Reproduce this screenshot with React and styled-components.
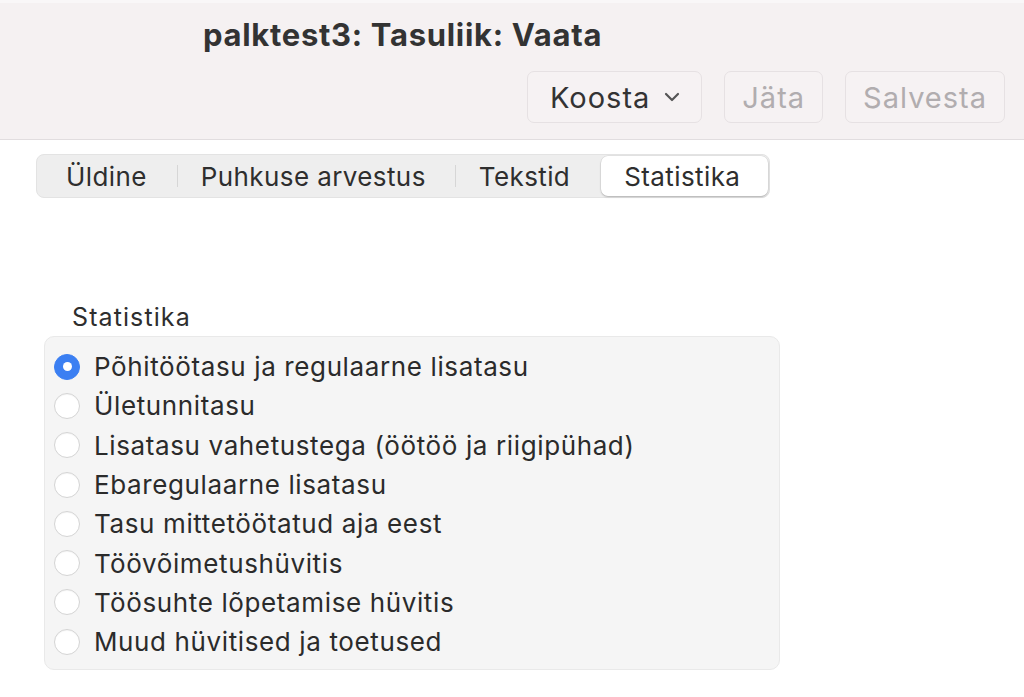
import React, { useState } from "react";
import styled, { createGlobalStyle } from "styled-components";

const GlobalStyle = createGlobalStyle`
  html, body {
    margin: 0;
    padding: 0;
    background: #ffffff;
    font-family: Inter, "Noto Sans", "Liberation Sans", sans-serif;
    color: #2a2a2a;
  }
`;

const Page = styled.div`
  width: 1024px;
  height: 697px;
  overflow: hidden;
  background: #ffffff;
`;

const Header = styled.header`
  height: 136px;
  border-top: 3px solid #f9f7f8;
  border-bottom: 1px solid #e1dddf;
  background: #f5f1f2;
  display: flex;
  flex-direction: column;
  padding: 0 19px 0 203px;
  box-sizing: content-box;
`;

const Title = styled.h1`
  margin: 13px 0 0;
  font-size: 31px;
  font-weight: 700;
  line-height: 38px;
  color: #333333;
  letter-spacing: 0.7px;
`;

const Toolbar = styled.div`
  display: flex;
  justify-content: flex-end;
  gap: 22px;
  margin-top: 17px;
`;

const Button = styled.button`
  height: 52px;
  padding: 0 ${(p) => (p.$menu ? "21px 0 22px" : "17px")};
  display: flex;
  align-items: center;
  gap: 14px;
  border: 1px solid #e6e1e3;
  border-radius: 7px;
  background: #f6f2f3;
  font-family: inherit;
  font-size: 29px;
  color: ${(p) => (p.disabled ? "#b1adaf" : "#333333")};
  letter-spacing: 1px;
`;

const Content = styled.main`
  padding: 14px 0 0 36px;
`;

const Segmented = styled.div`
  display: inline-flex;
  align-items: center;
  height: 42px;
  padding: 0 1px;
  background: #eeeeee;
  border: 1px solid #e3e3e3;
  border-radius: 8px;
`;

const Segment = styled.div`
  height: 40px;
  display: flex;
  align-items: center;
  padding: 0 ${(p) => p.$pr}px 0 ${(p) => p.$pl}px;
  font-size: 26px;
  color: #2e2e2e;
  border-radius: 7px;
  background: ${(p) => (p.$active ? "#ffffff" : "transparent")};
  box-shadow: ${(p) => (p.$active ? "0 1px 2px rgba(0,0,0,0.22), 0 0 0 0.5px rgba(0,0,0,0.08)" : "none")};
  letter-spacing: 0.4px;
`;

const Divider = styled.span`
  width: 1px;
  height: 22px;
  background: #d6d6d6;
`;

const GroupLabel = styled.div`
  margin: 105px 0 0 36px;
  font-size: 25px;
  line-height: 28px;
  color: #2e2e2e;
  letter-spacing: 1.1px;
`;

const Group = styled.div`
  width: 734px;
  margin: 5px 0 0 8px;
  padding: 10px 0 8px;
  background: #f5f5f5;
  border: 1px solid #e9e9e9;
  border-radius: 10px;
`;

const Option = styled.label`
  height: 39.3px;
  display: flex;
  align-items: center;
  gap: 14px;
  padding-left: 9px;
  font-size: 26px;
  color: #2b2b2b;
  letter-spacing: 0.62px;
  cursor: pointer;
`;

const Radio = styled.span`
  width: 26px;
  height: 26px;
  box-sizing: border-box;
  border-radius: 50%;
  flex-shrink: 0;
  display: flex;
  align-items: center;
  justify-content: center;
  background: ${(p) => (p.$checked ? "#3b7ff2" : "#ffffff")};
  border: 1px solid ${(p) => (p.$checked ? "#3b7ff2" : "#d4d4d4")};
  box-shadow: ${(p) => (p.$checked ? "none" : "inset 0 1px 1px rgba(0,0,0,0.04)")};

  &::after {
    content: "";
    width: 9px;
    height: 9px;
    border-radius: 50%;
    background: #ffffff;
    display: ${(p) => (p.$checked ? "block" : "none")};
  }
`;

const Chevron = () => (
  <svg width="16" height="10" viewBox="0 0 16 10" fill="none">
    <path d="M2 2l6 6 6-6" stroke="#555" strokeWidth="2.2" strokeLinecap="round" strokeLinejoin="round" />
  </svg>
);

const options = [
  "Põhitöötasu ja regulaarne lisatasu",
  "Ületunnitasu",
  "Lisatasu vahetustega (öötöö ja riigipühad)",
  "Ebaregulaarne lisatasu",
  "Tasu mittetöötatud aja eest",
  "Töövõimetushüvitis",
  "Töösuhte lõpetamise hüvitis",
  "Muud hüvitised ja toetused",
];

export default function App() {
  const [selected, setSelected] = useState(0);
  return (
    <Page>
      <GlobalStyle />
      <Header>
        <Title>palktest3: Tasuliik: Vaata</Title>
        <Toolbar>
          <Button $menu>
            Koosta <Chevron />
          </Button>
          <Button disabled>Jäta</Button>
          <Button disabled>Salvesta</Button>
        </Toolbar>
      </Header>
      <Content>
        <Segmented>
          <Segment $pl={28} $pr={30}>Üldine</Segment>
          <Divider />
          <Segment $pl={23} $pr={29}>Puhkuse arvestus</Segment>
          <Divider />
          <Segment $pl={23} $pr={31}>Tekstid</Segment>
          <Segment $active $pl={23} $pr={28}>Statistika</Segment>
        </Segmented>
        <GroupLabel>Statistika</GroupLabel>
        <Group>
          {options.map((o, i) => (
            <Option key={o} onClick={() => setSelected(i)}>
              <Radio $checked={selected === i} />
              {o}
            </Option>
          ))}
        </Group>
      </Content>
    </Page>
  );
}
